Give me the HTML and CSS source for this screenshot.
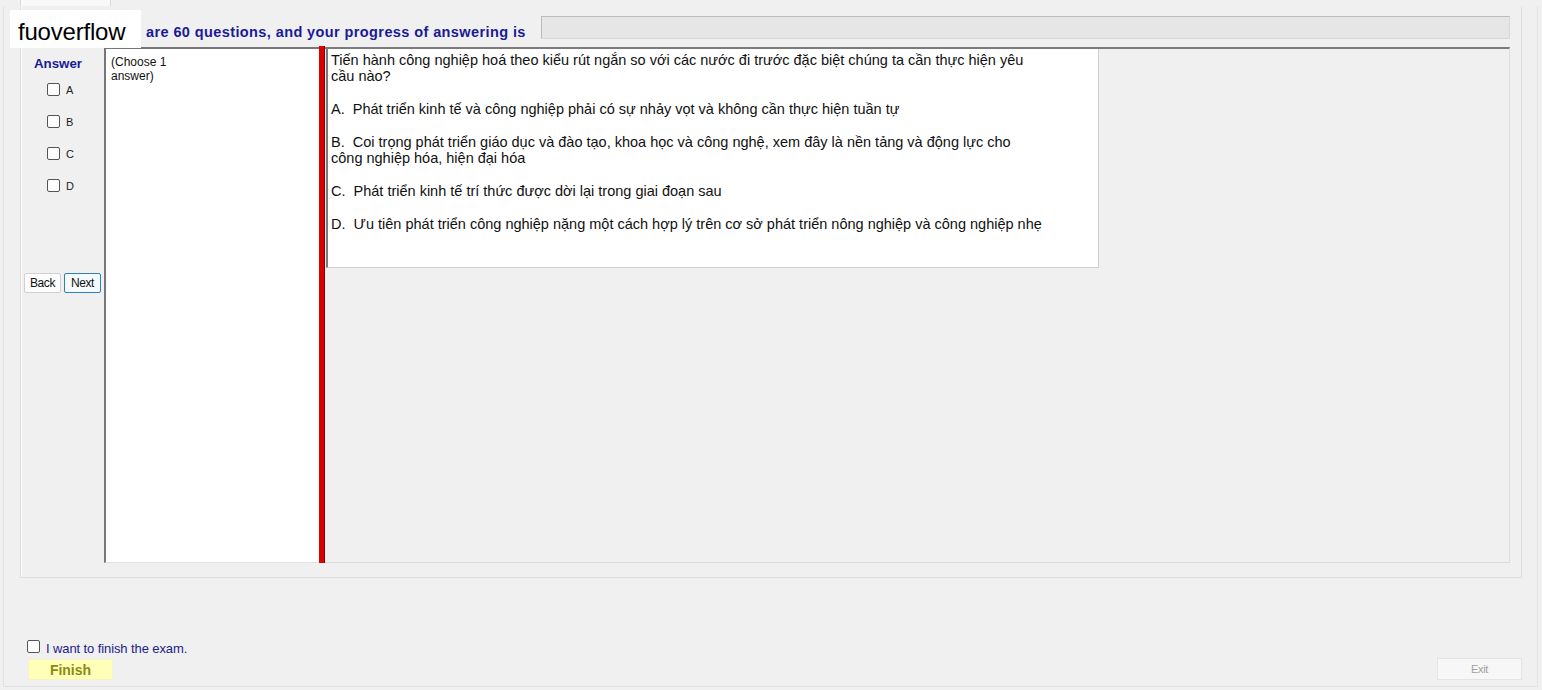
FILE: index.html
```html
<!DOCTYPE html>
<html lang="vi">
<head>
<meta charset="utf-8">
<title>Exam</title>
<link rel="stylesheet" href="styles.css">
</head>
<body>
<div class="tabs"><div class="tab"></div></div>
<div class="window">
  <div class="group">
    <div class="header">
      <div class="progress-text">are 60 questions, and your progress of answering is</div>
      <div class="progress"></div>
    </div>
    <div class="main">
      <div class="answer-col">
        <div class="answer-title">Answer</div>
        <label class="opt"><span class="cb"></span>A</label>
        <label class="opt"><span class="cb"></span>B</label>
        <label class="opt"><span class="cb"></span>C</label>
        <label class="opt"><span class="cb"></span>D</label>
        <div class="nav">
          <button class="btn">Back</button>
          <button class="btn next">Next</button>
        </div>
      </div>
      <div class="choose">(Choose 1<br>answer)</div>
      <div class="redbar"></div>
      <div class="qarea">
        <div class="question">
          <p>Tiến hành công nghiệp hoá theo kiểu rút ngắn so với các nước đi trước đặc biệt chúng ta cần thực hiện yêu<br>cầu nào?</p>
          <p>A.&nbsp; Phát triển kinh tế và công nghiệp phải có sự nhảy vọt và không cần thực hiện tuần tự</p>
          <p>B.&nbsp; Coi trọng phát triển giáo dục và đào tạo, khoa học và công nghệ, xem đây là nền tảng và động lực cho<br>công nghiệp hóa, hiện đại hóa</p>
          <p>C.&nbsp; Phát triển kinh tế trí thức được dời lại trong giai đoạn sau</p>
          <p>D.&nbsp; Ưu tiên phát triển công nghiệp nặng một cách hợp lý trên cơ sở phát triển nông nghiệp và công nghiệp nhẹ</p>
        </div>
      </div>
    </div>
  </div>
  <div class="bottom">
    <div class="finish-box">
      <label class="finish-check"><span class="cb"></span>I want to finish the exam.</label>
      <button class="finish">Finish</button>
    </div>
    <button class="exit">Exit</button>
  </div>
</div>
<div class="brand">fuoverflow</div>
</body>
</html>
```
FILE: styles.css
```css
* { box-sizing: border-box; }
html, body { margin: 0; padding: 0; }
body {
  width: 1542px;
  height: 690px;
  overflow: hidden;
  background: #f0f0f0;
  font-family: "Liberation Sans", Arial, sans-serif;
  color: #000;
}
.tabs {
  height: 6px;
  padding-left: 20px;
}
.tab {
  width: 91px;
  height: 6px;
  background: #f9f9f9;
  border: 1px solid #d9d9d9;
  border-top: none;
  border-bottom: none;
}
.window {
  margin: 0 4px 0 3px;
  height: 681px;
  border: 1px solid #e2e2e2;
  border-top: none;
  padding: 1px 15px 0 16px;
  display: flex;
  flex-direction: column;
}
.group {
  height: 571px;
  border: 1px solid #dedede;
  border-top: none;
  box-shadow: inset 1px 0 0 #fafafa;
  padding: 0 11px 0 1px;
}
.header {
  height: 39px;
  display: flex;
  align-items: center;
  padding-left: 124px;
}
.progress-text {
  font-weight: bold;
  font-size: 14.5px;
  letter-spacing: 0.4px;
  color: #1a1a96;
  padding-top: 10px;
  width: 395px;
  white-space: nowrap;
}
.progress {
  flex: 1;
  height: 23px;
  margin-top: 2px;
  background: #e6e6e6;
  border: 1px solid #bcbcbc;
  border-right-color: #d8d8d8;
  border-bottom-color: #d8d8d8;
}
.main {
  height: 517px;
  display: flex;
}
.answer-col {
  width: 82px;
  display: flex;
  flex-direction: column;
  padding-top: 10px;
}
.answer-title {
  font-weight: bold;
  font-size: 13.3px;
  color: #1a1a96;
  padding-left: 12px;
  height: 18px;
  margin-bottom: 9px;
}
.opt {
  display: flex;
  align-items: center;
  height: 13px;
  margin-bottom: 19px;
  padding-left: 25px;
  font-size: 11px;
  color: #222;
}
.cb {
  display: inline-block;
  width: 13px;
  height: 13px;
  border: 1px solid #555;
  border-radius: 2px;
  background: #fff;
  margin-right: 6px;
}
.nav {
  display: flex;
  gap: 3px;
  padding-left: 2px;
  margin-top: 62px;
}
.btn {
  width: 37px;
  height: 20px;
  padding: 0;
  font-family: "Liberation Sans", Arial, sans-serif;
  font-size: 12px;
  letter-spacing: -0.4px;
  color: #111;
  background: #fdfdfd;
  border: 1px solid #d0d0d0;
  border-radius: 2px;
}
.btn.next {
  border-color: #2f7fb8;
  background: #f4fbff;
}
.choose {
  width: 215px;
  background: #fff;
  border-left: 2px solid #777;
  border-top: 2px solid #777;
  border-bottom: 1px solid #e2e2e2;
  margin-top: 1px;
  padding: 6px 0 0 5px;
  font-size: 12px;
  line-height: 14px;
  color: #111;
}
.redbar {
  width: 6px;
  background: #d80000;
  border-right: 1px solid #8a0000;
}
.qarea {
  flex: 1;
  border-top: 2px solid #7b7b7b;
  border-right: 1px solid #dcdcdc;
  border-bottom: 1px solid #dcdcdc;
  margin-top: 1px;
  padding-left: 1px;
}
.question {
  width: 773px;
  height: 219px;
  background: #fff;
  border-left: 2px solid #7b7b7b;
  border-right: 1px solid #d0d0d0;
  border-bottom: 1px solid #d0d0d0;
  padding: 3px 0 0 3px;
  font-size: 14.5px;
  line-height: 16px;
  color: #111;
  white-space: nowrap;
}
.question p {
  margin: 0 0 17px 0;
}
.bottom {
  flex: 1;
  display: flex;
  justify-content: space-between;
  align-items: flex-end;
  padding: 0 0 6px 7px;
}
.finish-box {
  display: flex;
  flex-direction: column;
}
.finish-check {
  display: flex;
  align-items: center;
  font-size: 13px;
  letter-spacing: -0.1px;
  color: #1c1c8a;
  margin-bottom: 3px;
}
.finish-check .cb {
  width: 13px;
  height: 13px;
  margin-right: 6px;
  margin-top: -4px;
}
.finish {
  width: 85px;
  height: 21px;
  margin-left: 1px;
  background: #ffffb8;
  border: 1px solid #f4f4c8;
  font-family: "Liberation Sans", Arial, sans-serif;
  font-weight: bold;
  font-size: 14px;
  color: #8a8a10;
  padding: 0;
}
.exit {
  width: 85px;
  height: 22px;
  background: #f7f7f7;
  border: 1px solid #e4e4e4;
  font-family: "Liberation Sans", Arial, sans-serif;
  font-size: 11px;
  letter-spacing: -0.3px;
  color: #a0a0a0;
  padding: 0;
  margin-bottom: 0;
}
.brand {
  position: absolute;
  left: 10px;
  top: 10px;
  width: 131px;
  height: 38px;
  background: #fff;
  padding: 8px 0 0 8px;
  font-size: 24px;
  line-height: 28px;
  color: #000;
  font-family: "Liberation Sans", Arial, sans-serif;
  letter-spacing: -0.2px;
}
```
